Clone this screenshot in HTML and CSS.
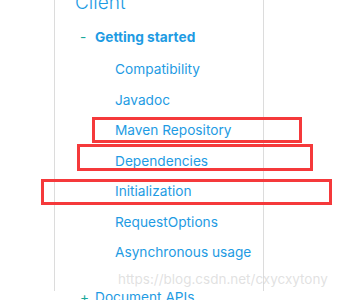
FILE: index.html
```html
<!DOCTYPE html>
<html lang="en">
<head>
    <meta charset="UTF-8">
    <title>Client docs nav</title>
    <link rel="stylesheet" href="styles.css">
</head>
<body>
    <div class="page">
        <nav class="sidebar">
            <div class="section-title">Client</div>
            <div class="group">
                <div class="group-head"><span class="toggle">-</span><span class="group-name">Getting started</span></div>
                <ul class="items">
                    <li>Compatibility</li>
                    <li>Javadoc</li>
                    <li>Maven Repository</li>
                    <li>Dependencies</li>
                    <li>Initialization</li>
                    <li>RequestOptions</li>
                    <li>Asynchronous usage</li>
                </ul>
            </div>
            <div class="group-head closed"><span class="toggle">+</span><span class="group-link">Document APIs</span></div>
        </nav>
        <div class="watermark">https://blog.csdn.net/cxycxytony</div>
        <div class="mark mark-1"></div>
        <div class="mark mark-2"></div>
        <div class="mark mark-3"></div>
    </div>
</body>
</html>
```

FILE: styles.css
```css
body {
    margin: 0;
    background: white;
    font-family: Inter, "Noto Sans", sans-serif;
}
.page {
    position: relative;
    width: 350px;
    height: 300px;
    overflow: hidden;
}
.sidebar {
    margin-left: 54px;
    width: 208px;
    height: 300px;
    border-left: 1px solid #dcdcdc;
    border-right: 1px solid #dcdcdc;
    color: #1e9be3;
}
.section-title {
    margin-top: -9px;
    padding-left: 20px;
    font-size: 19px;
    font-weight: 300;
    line-height: 24px;
}
.group-head {
    display: flex;
    align-items: center;
    height: 30px;
    margin-top: 7px;
    padding-left: 25px;
    font-size: 13.7px;
}
.toggle {
    width: 15px;
    color: #1aa89a;
}
.group-name {
    font-weight: 700;
}
.items {
    list-style: none;
    margin: 2px 0 0;
    padding: 0 0 0 60px;
}
.items li {
    height: 30.5px;
    line-height: 30.5px;
    font-size: 13.7px;
}
.closed {
    margin-top: 14px;
}
.watermark {
    position: absolute;
    left: 118px;
    top: 271px;
    font-size: 13.5px;
    color: rgba(200, 200, 200, 0.55);
}
.mark {
    position: absolute;
    border: 3px solid #f5393b;
}
.mark-1 {
    left: 92px;
    top: 117px;
    width: 204px;
    height: 20px;
}
.mark-2 {
    left: 77px;
    top: 144px;
    width: 230px;
    height: 21px;
}
.mark-3 {
    left: 41px;
    top: 179px;
    width: 285px;
    height: 20px;
}
```
